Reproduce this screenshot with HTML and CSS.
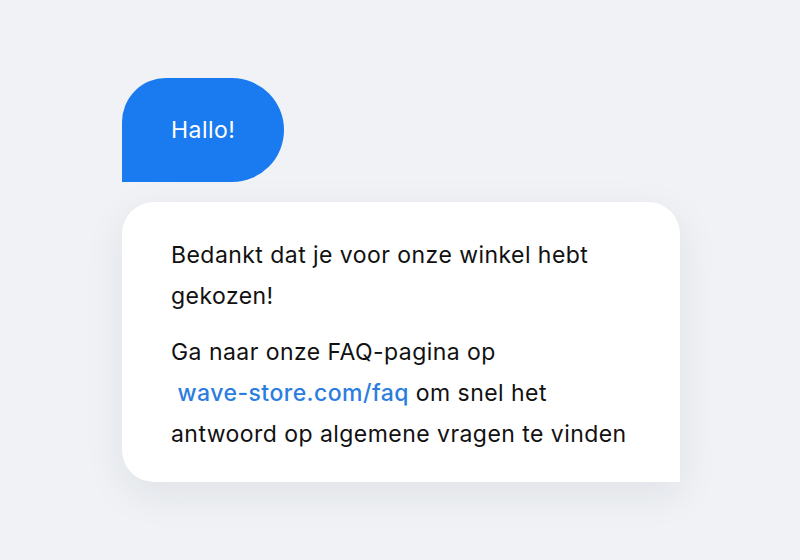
FILE: index.html
```html
<!DOCTYPE html>
<html lang="nl">
<head>
<meta charset="utf-8">
<link rel="stylesheet" href="styles.css">
</head>
<body>
<main class="chat">
  <div class="bubble bubble-out">Hallo!</div>
  <div class="bubble bubble-in">
    <p class="para">Bedankt dat je voor onze winkel hebt gekozen!</p>
    <p class="para">Ga naar onze FAQ-pagina op <a class="link" href="#">&nbsp;wave-store.com/faq</a> om snel het antwoord op algemene vragen te vinden</p>
  </div>
</main>
</body>
</html>
```
FILE: styles.css
```css
html, body {
  margin: 0;
  padding: 0;
  width: 800px;
  height: 560px;
  background: #f0f2f5;
  overflow: hidden;
}
.chat {
  display: flex;
  flex-direction: column;
  align-items: flex-start;
  gap: 20px;
  padding: 78px 0 0 122px;
  font-family: Inter, "Noto Sans", sans-serif;
  font-size: 23px;
  letter-spacing: 0.45px;
}
.bubble-out {
  box-sizing: border-box;
  height: 104px;
  padding: 0 49px;
  display: flex;
  align-items: center;
  background: #1a7bf0;
  color: #ffffff;
  border-radius: 44px 52px 52px 0;
}
.bubble-in {
  box-sizing: border-box;
  width: 558px;
  height: 280px;
  padding: 33px 43px 0 49px;
  background: #ffffff;
  color: #111111;
  line-height: 41px;
  border-radius: 32px 32px 0 32px;
  box-shadow: 0 12px 40px rgba(30, 40, 60, 0.08);
}
.para {
  margin: 0 0 15px;
}
.link {
  color: #2b7de0;
  font-weight: 500;
  text-decoration: none;
  white-space: nowrap;
}
```
